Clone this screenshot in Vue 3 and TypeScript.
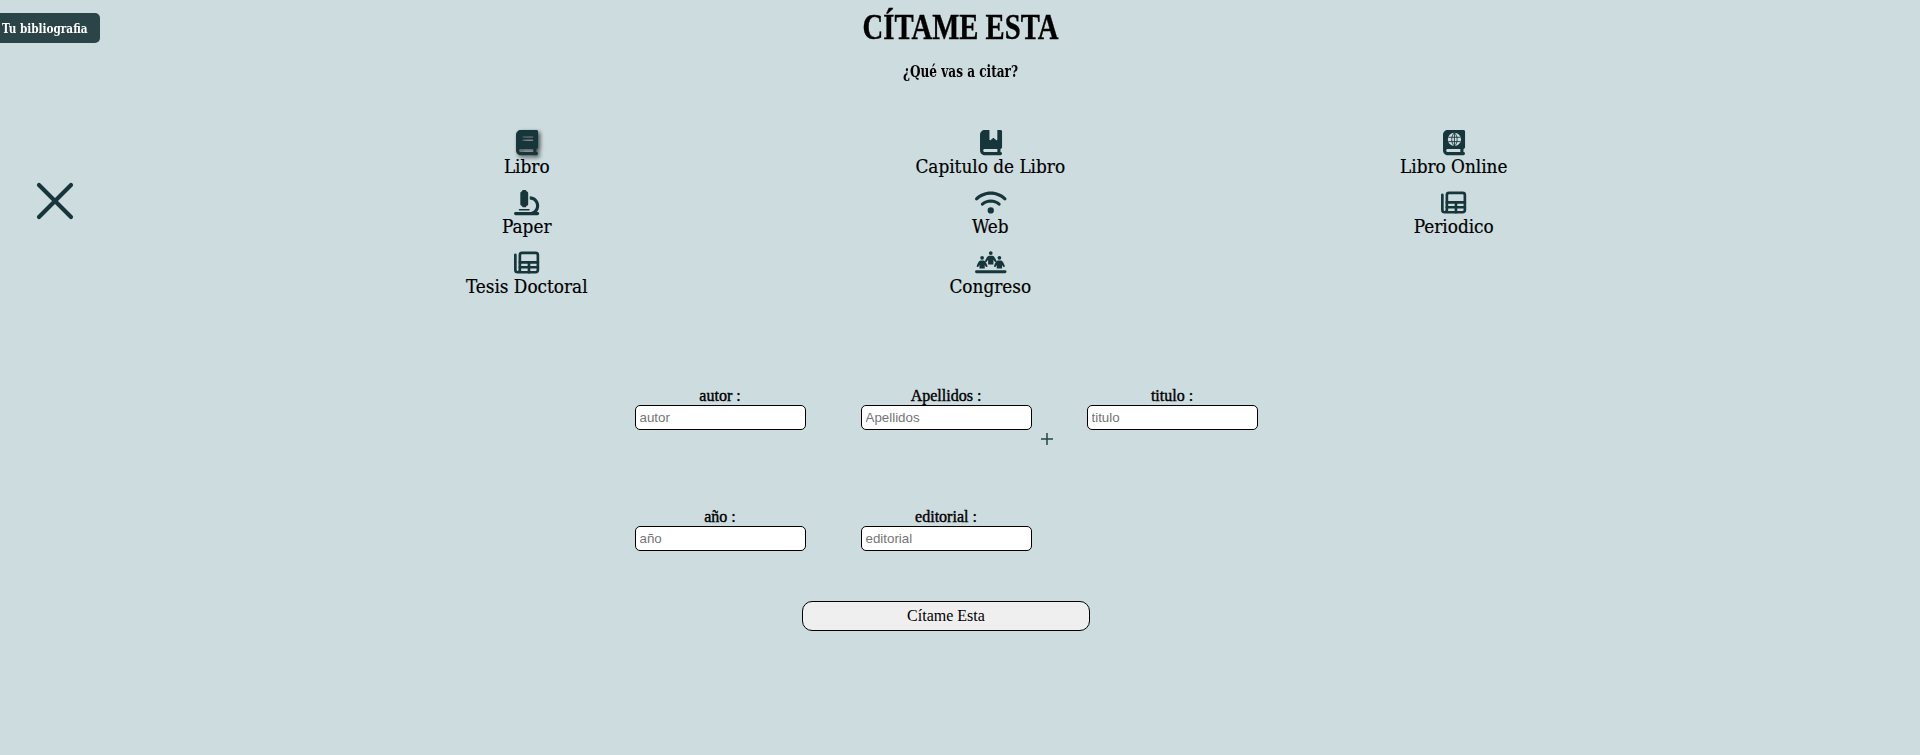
<script setup lang="ts">
interface Source { name: string; icon: string; active?: boolean }
interface Field { name: string; extra?: boolean }

const sources: Source[] = [
  { name: 'Libro', icon: 'book', active: true },
  { name: 'Capitulo de Libro', icon: 'bookmark' },
  { name: 'Libro Online', icon: 'atlas' },
  { name: 'Paper', icon: 'microscope' },
  { name: 'Web', icon: 'wifi' },
  { name: 'Periodico', icon: 'news' },
  { name: 'Tesis Doctoral', icon: 'news' },
  { name: 'Congreso', icon: 'people' },
]
const fields: Field[] = [
  { name: 'autor' },
  { name: 'Apellidos', extra: true },
  { name: 'titulo' },
  { name: 'año' },
  { name: 'editorial' },
]

const paths: Record<string, string> = {
  book: 'M96 0C43 0 0 43 0 96V416c0 53 43 96 96 96H384h32c17.7 0 32-14.3 32-32s-14.3-32-32-32V384c17.7 0 32-14.3 32-32V32c0-17.7-14.3-32-32-32H384 96zm0 384H352v64H96c-17.7 0-32-14.3-32-32s14.3-32 32-32zm32-240c0-8.8 7.2-16 16-16H336c8.8 0 16 7.2 16 16s-7.2 16-16 16H144c-8.8 0-16-7.2-16-16zm16 48H336c8.8 0 16 7.2 16 16s-7.2 16-16 16H144c-8.8 0-16-7.2-16-16s7.2-16 16-16z',
  bookmark: 'M0 96C0 43 43 0 96 0h96V190.7c0 13.4 15.5 20.9 26 12.5L272 160l54 43.2c10.5 8.4 26 .9 26-12.5V0h32 32c17.7 0 32 14.3 32 32V352c0 17.7-14.3 32-32 32v64c17.7 0 32 14.3 32 32s-14.3 32-32 32H384 96c-53 0-96-43-96-96V96zM64 416c0 17.7 14.3 32 32 32H352V384H96c-17.7 0-32 14.3-32 32z',
  atlas: 'M96 0C43 0 0 43 0 96V416c0 53 43 96 96 96H384h32c17.7 0 32-14.3 32-32s-14.3-32-32-32V384c17.7 0 32-14.3 32-32V32c0-17.7-14.3-32-32-32H384 96zm0 384H352v64H96c-17.7 0-32-14.3-32-32s14.3-32 32-32z',
  microscope: 'M160 32c0-17.7 14.3-32 32-32h32c17.7 0 32 14.3 32 32c17.7 0 32 14.3 32 32V288c0 17.7-14.3 32-32 32c0 17.7-14.3 32-32 32H192c-17.7 0-32-14.3-32-32c-17.7 0-32-14.3-32-32V64c0-17.7 14.3-32 32-32zM32 448H320c70.7 0 128-57.3 128-128s-57.3-128-128-128V128c106 0 192 86 192 192c0 49.2-18.5 94-48.9 128H480c17.7 0 32 14.3 32 32s-14.3 32-32 32H320 32c-17.7 0-32-14.3-32-32s14.3-32 32-32zm80-64H304c8.8 0 16 7.2 16 16s-7.2 16-16 16H112c-8.8 0-16-7.2-16-16s7.2-16 16-16z',
  wifi: 'M54.2 202.9C123.2 136.7 216.8 96 320 96s196.8 40.7 265.8 106.9c12.8 12.2 33 11.8 45.2-.9s11.8-33-.9-45.2C549.7 79.5 440.4 32 320 32S90.3 79.5 9.8 156.7C-2.9 169-3.3 189.2 8.9 202s32.5 13.2 45.2 .9zM320 256c56.8 0 108.6 21.1 148.2 56c13.3 11.7 33.5 10.4 45.2-2.8s10.4-33.5-2.8-45.2C459.8 219.2 393 192 320 192s-139.8 27.2-190.5 72c-13.3 11.7-14.5 31.9-2.8 45.2s31.9 14.5 45.2 2.8c39.5-34.9 91.3-56 148.2-56zm64 160a64 64 0 1 0 -128 0 64 64 0 1 0 128 0z',
}
const viewWidths: Record<string, number> = { book: 448, bookmark: 448, atlas: 448, microscope: 512, wifi: 640, news: 512, people: 640 }
</script>

<template>
  <div class="page">
    <aside class="side">
      <button class="library" type="button"><span>Tu bibliografia</span></button>
      <svg class="close" viewBox="0 0 38 38"><path d="M3 3L35 35M35 3L3 35" /></svg>
    </aside>

    <header class="head">
      <h1>CÍTAME ESTA</h1>
      <h2>¿Qué vas a citar?</h2>
    </header>

    <nav class="sources">
      <div v-for="s in sources" :key="s.name" class="source">
        <svg class="icon" :class="{ active: s.active }" :viewBox="`0 0 ${viewWidths[s.icon]} 512`" :width="viewWidths[s.icon] / 20.3" height="25.2">
          <path v-if="paths[s.icon]" :d="paths[s.icon]" />
          <g v-if="s.icon === 'atlas'">
            <circle class="globe" cx="232" cy="192" r="134" />
            <path class="meridian" d="M232 58V326M106 148H358M106 236H358M232 58C158 120 158 264 232 326M232 58C306 120 306 264 232 326" />
          </g>
          <g v-else-if="s.icon === 'news'" class="outline">
            <path d="M27 96V406Q27 452 74 452H438Q485 452 485 408V104Q485 60 438 60H164Q119 60 119 104V408Q119 452 74 452" />
            <path d="M119 251H485M119 350H485M304 251V452" />
          </g>
          <g v-else-if="s.icon === 'people'" transform="translate(0 22)">
            <circle cx="320" cy="40" r="38" />
            <circle cx="144" cy="136" r="38" />
            <circle cx="496" cy="136" r="38" />
            <path d="M286 96H354C392 98 412 152 434 194C444 214 418 234 402 215L374 178V272H266V178L238 215C222 234 196 214 206 194C228 152 248 98 286 96Z" />
            <path d="M112 192H176C212 192 230 248 252 296C260 316 234 332 220 316L198 284V352H90V284L68 316C54 332 28 316 36 296C58 248 76 192 112 192Z" />
            <path d="M464 192H528C564 192 582 248 604 296C612 316 586 332 572 316L550 284V352H442V284L420 316C406 332 380 316 388 296C410 248 428 192 464 192Z" />
            <rect x="0" y="392" width="640" height="60" rx="30" />
          </g>
        </svg>
        <span>{{ s.name }}</span>
      </div>
    </nav>

    <form class="form" @submit.prevent>
      <div class="fields">
        <label v-for="f in fields" :key="f.name" class="field">
          <span>{{ f.name }} :</span>
          <input type="text" :placeholder="f.name">
          <svg v-if="f.extra" class="plus" viewBox="0 0 12 12"><path d="M6 0V12M0 6H12" /></svg>
        </label>
      </div>
      <button class="submit" type="submit">Cítame Esta</button>
    </form>
  </div>
</template>

<style>
body { margin: 0; background: #cddcdf; }
</style>

<style scoped>
.page {
  position: relative;
  height: 755px;
  overflow: hidden;
  box-sizing: border-box;
  background: #cddcdf;
  color: #000;
  font-family: "Liberation Serif", "Times New Roman", serif;
}
.side {
  position: absolute;
  left: 0;
  top: 13px;
  width: 100px;
}
.library {
  display: block;
  width: 104px;
  height: 30px;
  margin-left: -4px;
  padding: 0 0 0 6px;
  border: 0;
  border-radius: 5px;
  background: #2b4448;
  color: #fff;
  font: bold 13px "DejaVu Serif Condensed", "DejaVu Serif", serif;
  text-align: left;
  white-space: nowrap;
}
.library span { display: inline-block; transform: scaleX(.895); transform-origin: left; }
.close { display: block; width: 38px; height: 38px; margin: 139px 0 0 36px; }
.close path { fill: none; stroke: #16363b; stroke-width: 4.2; stroke-linecap: round; }
.head { display: flex; flex-direction: column; align-items: center; height: 128px; }
h1 {
  margin: 8px 0 0;
  font-size: 35px;
  line-height: 40px;
  transform: scaleX(.82);
  -webkit-text-stroke: .4px #000;
}
h2 {
  margin: 13px 0 0;
  font: bold 16px/22px "DejaVu Serif Condensed", "DejaVu Serif", serif;
  transform: scaleX(.84);
}
.sources {
  display: grid;
  grid-template-columns: repeat(3, 463.5px);
  grid-auto-rows: 60px;
  margin-left: 295px;
}
.source { display: flex; flex-direction: column; align-items: center; }
.source span {
  font: 18.8px/24px "DejaVu Serif Condensed", "DejaVu Serif", serif;
  margin-top: .2px;
  -webkit-text-stroke: .2px #000;
}
.icon { display: block; margin: 1.6px 0 0 .6px; overflow: visible; fill: #16363b; }
.icon.active { filter: drop-shadow(2px 2px 2px rgba(0, 0, 0, .65)); }
.icon .globe { fill: #cddcdf; }
.icon .meridian { fill: none; stroke: #16363b; stroke-width: 18; }
.outline { fill: none; stroke: #16363b; stroke-width: 54; stroke-linecap: round; }
.form { width: 678px; margin: 79px 0 0 607px; }
.fields {
  display: grid;
  grid-template-columns: repeat(3, 226px);
  grid-auto-rows: 121px;
}
.field { position: relative; display: flex; flex-direction: column; align-items: center; }
.field span {
  font: 16px/18px "Liberation Serif", serif;
  -webkit-text-stroke: .4px #000;
}
input {
  box-sizing: border-box;
  width: 171px;
  height: 25px;
  padding: 1px 4px;
  border: 1px solid #000;
  border-radius: 5px;
  background: #fff;
  font: 13.333px "Liberation Sans", Arial, sans-serif;
}
input::placeholder { color: #757575; }
.plus { position: absolute; left: 207.5px; top: 45.5px; width: 12px; height: 12px; }
.plus path { stroke: #2b4448; stroke-width: 1.5; }
.submit {
  display: block;
  width: 288px;
  height: 30px;
  margin: -28px auto 0;
  border: 1px solid #000;
  border-radius: 10px;
  background: #efefef;
  color: #000;
  font: 16px "Liberation Serif", serif;
}
</style>
